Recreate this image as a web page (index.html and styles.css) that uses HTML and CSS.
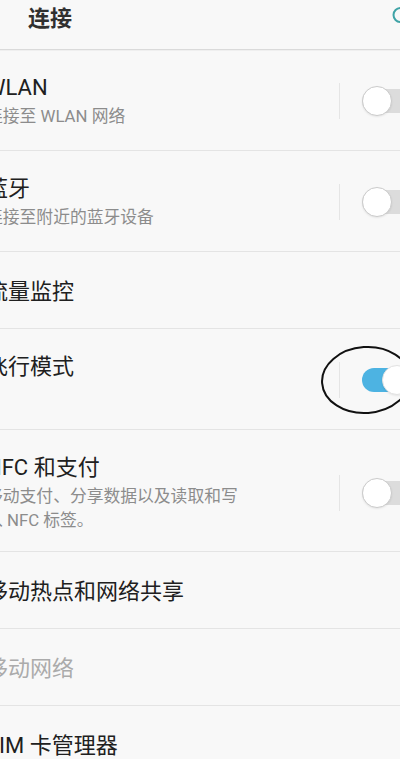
FILE: index.html
```html
<!DOCTYPE html>
<html lang="zh-CN">
<head>
<meta charset="utf-8">
<title>连接</title>
<link rel="stylesheet" href="styles.css">
</head>
<body>
<div class="screen">
  <header class="appbar">
    <h1 class="appbar__title">连接</h1>
    <svg class="appbar__search" width="24" height="24" viewBox="0 0 24 24" aria-hidden="true">
      <circle cx="9.5" cy="12" r="7" fill="none" stroke="#3fa3a6" stroke-width="2"/>
      <line x1="14.5" y1="17" x2="20" y2="22.5" stroke="#3fa3a6" stroke-width="2"/>
    </svg>
  </header>
  <ul class="list">
    <li class="row row--two">
      <div class="row__text"><span class="row__title">WLAN</span><span class="row__sub">连接至 WLAN 网络</span></div>
      <div class="row__ctrl"><span class="row__sep"></span><span class="toggle"><span class="toggle__knob"></span></span></div>
    </li>
    <li class="row row--two">
      <div class="row__text"><span class="row__title">蓝牙</span><span class="row__sub">连接至附近的蓝牙设备</span></div>
      <div class="row__ctrl"><span class="row__sep"></span><span class="toggle"><span class="toggle__knob"></span></span></div>
    </li>
    <li class="row row--one">
      <div class="row__text"><span class="row__title">流量监控</span></div>
    </li>
    <li class="row row--two">
      <div class="row__text"><span class="row__title">飞行模式</span><span class="row__sub">&nbsp;</span></div>
      <div class="row__ctrl"><span class="row__sep"></span><span class="toggle toggle--on"><span class="toggle__knob"></span></span></div>
    </li>
    <li class="row row--three">
      <div class="row__text"><span class="row__title">NFC 和支付</span><span class="row__sub">移动支付、分享数据以及读取和写入 NFC 标签。</span></div>
      <div class="row__ctrl"><span class="row__sep"></span><span class="toggle"><span class="toggle__knob"></span></span></div>
    </li>
    <li class="row row--one">
      <div class="row__text"><span class="row__title">移动热点和网络共享</span></div>
    </li>
    <li class="row row--one">
      <div class="row__text"><span class="row__title row__title--disabled">移动网络</span></div>
    </li>
    <li class="row row--one">
      <div class="row__text"><span class="row__title">SIM 卡管理器</span></div>
    </li>
  </ul>
  <svg class="annotation" width="100" height="80" viewBox="0 0 100 80" aria-hidden="true">
    <ellipse cx="48" cy="37" rx="44" ry="33" fill="none" stroke="#111" stroke-width="2" transform="rotate(-4 48 37)"/>
  </svg>
</div>
</body>
</html>
```
FILE: styles.css
```css
html, body {
  margin: 0;
  padding: 0;
  overflow: hidden;
}
body {
  background: #f8f8f8;
  font-family: Roboto, "Noto Sans CJK SC", sans-serif;
}
.screen {
  position: relative;
  width: 400px;
  height: 759px;
  overflow: hidden;
}
.appbar {
  display: flex;
  align-items: flex-start;
  height: 49px;
  padding-left: 28px;
  border-bottom: 1px solid #dadada;
  box-shadow: 0 1px 0 #efefef;
}
.appbar__title {
  margin: 0;
  font-family: "Noto Sans CJK SC", sans-serif;
  font-size: 22px;
  line-height: 32px;
  font-weight: 700;
  color: #303030;
}
.appbar__search {
  margin-left: auto;
  margin-right: -15px;
  margin-top: 3px;
}
.list {
  list-style: none;
  margin: 0 0 0 -14px;
  padding: 0;
}
.row {
  display: flex;
  align-items: center;
  border-bottom: 1px solid #e4e4e4;
}
.row--two { padding: 24px 0 22px; }
.row--three { padding: 24px 0 19px; }
.row--one { padding: 26px 0 22px; }
.row__text {
  flex: 1;
  display: flex;
  flex-direction: column;
}
.row__title {
  font-family: Roboto, "Noto Sans CJK SC", sans-serif;
  font-size: 22px;
  line-height: 28px;
  color: #202020;
}
.row__title--disabled { color: #ababab; }
.row__sub {
  max-width: 262px;
  margin-top: 2px;
  font-size: 16.8px;
  line-height: 24px;
  color: #8c8c8c;
}
.row__ctrl {
  display: flex;
  align-items: center;
  margin-right: -12px;
}
.row__sep {
  width: 1px;
  height: 36px;
  background: #e5e5e5;
  margin-right: 22px;
}
.toggle {
  display: flex;
  align-items: center;
  width: 50px;
  height: 24px;
  border-radius: 12px;
  background: #dcdcdc;
}
.toggle--on {
  justify-content: flex-end;
  background: #4db3e2;
}
.toggle__knob {
  flex: none;
  width: 30px;
  height: 30px;
  box-sizing: border-box;
  border-radius: 50%;
  background: #fff;
  border: 1.5px solid #cbcbcb;
  box-shadow: 0 1px 2px rgba(0, 0, 0, 0.08);
}
.toggle--on .toggle__knob { border-color: #e2e2e2; }
.annotation {
  position: absolute;
  left: 318px;
  top: 343px;
}
```
